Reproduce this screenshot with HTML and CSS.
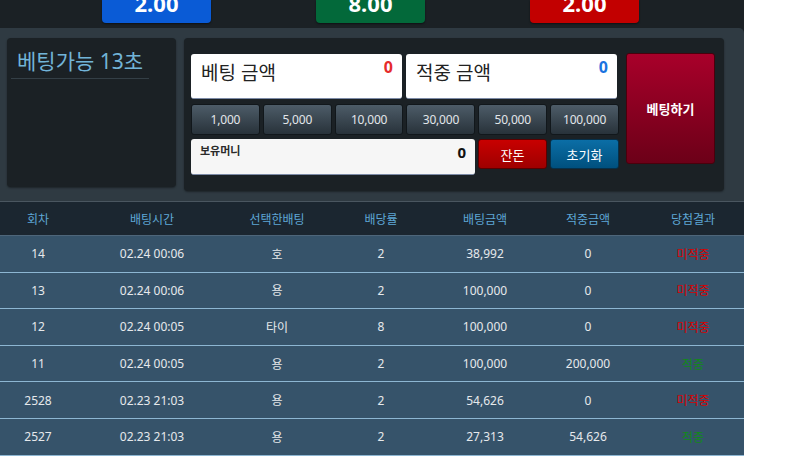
FILE: index.html
```html
<!DOCTYPE html>
<html lang="ko">
<head>
<meta charset="utf-8">
<title>베팅</title>
<link rel="stylesheet" href="styles.css">
</head>
<body>
<div class="wrap">
  <div class="odds">
    <div class="odd odd-blue"><span>2.00</span></div>
    <div class="odd odd-green"><span>8.00</span></div>
    <div class="odd odd-red"><span>2.00</span></div>
  </div>
  <div class="panel">
    <div class="timer-box">
      <div class="timer-title">베팅가능 13초</div>
    </div>
    <div class="bet-box">
      <div class="bet-main">
        <div class="amount-row">
          <div class="amount"><span class="amount-label">베팅 금액</span><span class="amount-val red">0</span></div>
          <div class="amount"><span class="amount-label">적중 금액</span><span class="amount-val blue">0</span></div>
        </div>
        <div class="chips">
          <button class="chip">1,000</button>
          <button class="chip">5,000</button>
          <button class="chip">10,000</button>
          <button class="chip">30,000</button>
          <button class="chip">50,000</button>
          <button class="chip">100,000</button>
        </div>
        <div class="money-row">
          <div class="money"><span class="money-label">보유머니</span><span class="money-val">0</span></div>
          <button class="act act-red">잔돈</button>
          <button class="act act-blue">초기화</button>
        </div>
      </div>
      <button class="bet-btn">베팅하기</button>
    </div>
  </div>
  <table class="history">
    <colgroup>
      <col class="c1"><col class="c2"><col class="c3"><col class="c4"><col class="c5"><col class="c6"><col class="c7">
    </colgroup>
    <thead>
      <tr><th>회차</th><th>배팅시간</th><th>선택한배팅</th><th>배당률</th><th>배팅금액</th><th>적중금액</th><th>당첨결과</th></tr>
    </thead>
    <tbody>
      <tr><td>14</td><td>02.24 00:06</td><td>호</td><td>2</td><td>38,992</td><td>0</td><td class="lose">미적중</td></tr>
      <tr><td>13</td><td>02.24 00:06</td><td>용</td><td>2</td><td>100,000</td><td>0</td><td class="lose">미적중</td></tr>
      <tr><td>12</td><td>02.24 00:05</td><td>타이</td><td>8</td><td>100,000</td><td>0</td><td class="lose">미적중</td></tr>
      <tr><td>11</td><td>02.24 00:05</td><td>용</td><td>2</td><td>100,000</td><td>200,000</td><td class="win">적중</td></tr>
      <tr><td>2528</td><td>02.23 21:03</td><td>용</td><td>2</td><td>54,626</td><td>0</td><td class="lose">미적중</td></tr>
      <tr><td>2527</td><td>02.23 21:03</td><td>용</td><td>2</td><td>27,313</td><td>54,626</td><td class="win">적중</td></tr>
    </tbody>
  </table>
</div>
</body>
</html>
```
FILE: styles.css
```css
html, body {
  margin: 0;
  padding: 0;
  background: #ffffff;
  overflow: hidden;
}
body {
  font-family: "Noto Sans", "Noto Sans CJK KR", sans-serif;
}
.wrap {
  width: 744px;
  background: #1b2125;
}
.odds {
  height: 28px;
  display: flex;
  gap: 105px;
  padding-left: 102px;
}
.odd {
  width: 109px;
  height: 23px;
  overflow: hidden;
  border-radius: 0 0 4px 4px;
  text-align: center;
  color: #ffffff;
  box-shadow: 0 1px 2px rgba(0,0,0,0.5);
}
.odd span {
  display: block;
  font-size: 22px;
  font-weight: 700;
  line-height: 22px;
  margin-top: -8px;
}
.odd-blue { background: #0a5bd6; }
.odd-green { background: #03693a; }
.odd-red { background: #c20000; }

.panel {
  display: flex;
  align-items: flex-start;
  gap: 8px;
  background: #2f3a42;
  border-radius: 0 5px 0 0;
  padding: 10px 19px 10px 7px;
  border-bottom: 1px solid #4a5660;
  height: 153px;
}
.timer-box {
  width: 169px;
  height: 149px;
  background: #1b2125;
  border-radius: 4px;
  box-shadow: 0 1px 2px rgba(0,0,0,0.4);
}
.timer-title {
  margin: 0 27px 0 4px;
  padding: 9px 6px 3px;
  line-height: 28px;
  font-size: 21px;
  color: #72b4d8;
  border-bottom: 1px solid #343f46;
  white-space: nowrap;
}
.bet-box {
  width: 540px;
  height: 153px;
  box-sizing: border-box;
  background: #1b2125;
  border-radius: 4px;
  display: flex;
  gap: 7px;
  padding: 16px 9px 0 7px;
  box-shadow: 0 1px 2px rgba(0,0,0,0.4);
}
.bet-main {
  width: 428px;
  display: flex;
  flex-direction: column;
}
.amount-row {
  display: flex;
  gap: 4px;
}
.amount {
  width: 211px;
  height: 45px;
  box-sizing: border-box;
  background: #ffffff;
  border-radius: 3px;
  border-bottom: 1px solid #7c8aa6;
  display: flex;
  justify-content: space-between;
  align-items: flex-start;
  padding: 6px 9px 0 10px;
}
.amount-label {
  font-size: 19px;
  line-height: 26px;
  color: #222222;
}
.amount-val {
  font-size: 16px;
  font-weight: 700;
  line-height: 14px;
}
.red { color: #e52b2b; }
.blue { color: #1a73e0; }
.chips {
  display: flex;
  gap: 3px;
  margin-top: 5px;
}
.chip {
  width: 69px;
  height: 31px;
  margin: 0;
  padding: 0;
  border: 1px solid #11171b;
  border-radius: 3px;
  background: linear-gradient(#4d5c68, #28323a);
  color: #e2e6ea;
  font-family: "Noto Sans", "Noto Sans CJK KR", sans-serif;
  font-size: 12px;
  letter-spacing: -0.2px;
}
.money-row {
  display: flex;
  align-items: flex-start;
  gap: 3px;
  margin-top: 4px;
}
.money {
  width: 284px;
  height: 36px;
  box-sizing: border-box;
  background: #f6f6f6;
  border-radius: 3px;
  border-bottom: 1px solid #7c8aa6;
  display: flex;
  justify-content: space-between;
  align-items: flex-start;
  padding: 4px 9px 0 9px;
}
.money-label {
  font-size: 11px;
  line-height: 16px;
  font-weight: 700;
  color: #2a2a2a;
}
.money-val {
  font-size: 15px;
  font-weight: 700;
  line-height: 16px;
  margin-top: 1px;
  color: #111111;
}
.act {
  width: 69px;
  height: 30px;
  margin: 0;
  padding: 0;
  border-radius: 3px;
  color: #ffffff;
  font-family: "Noto Sans", "Noto Sans CJK KR", sans-serif;
  font-size: 13px;
}
.act-red {
  border: 1px solid #5a0000;
  background: linear-gradient(#c80000, #9e0000);
}
.act-blue {
  border: 1px solid #06304a;
  background: linear-gradient(#0b6ea6, #00507e);
}
.bet-btn {
  width: 89px;
  height: 111px;
  margin: -1px 0 0 0;
  padding: 0;
  border: 1px solid #4a000c;
  border-radius: 3px;
  background: linear-gradient(#a8002a, #6c0018);
  color: #ffffff;
  font-family: "Noto Sans", "Noto Sans CJK KR", sans-serif;
  font-size: 13px;
  font-weight: 700;
}

.history {
  width: 744px;
  border-collapse: collapse;
  table-layout: fixed;
}
.c1 { width: 76px; }
.c2 { width: 152px; }
.c3 { width: 98px; }
.c4 { width: 110px; }
.c5 { width: 98px; }
.c6 { width: 108px; }
.c7 { width: 102px; }
.history th {
  height: 33px;
  padding: 0;
  background: #1b2630;
  color: #5ea6d6;
  font-size: 12px;
  font-weight: 400;
  border-bottom: 1px solid #4e667a;
}
.history td {
  height: 35.6px;
  padding: 0;
  text-align: center;
  background: #36536a;
  color: #e6e9ec;
  font-size: 12px;
  border-bottom: 1px solid #8db6d2;
}
.history td.lose { color: #d80000; }
.history td.win { color: #118a18; }
```
